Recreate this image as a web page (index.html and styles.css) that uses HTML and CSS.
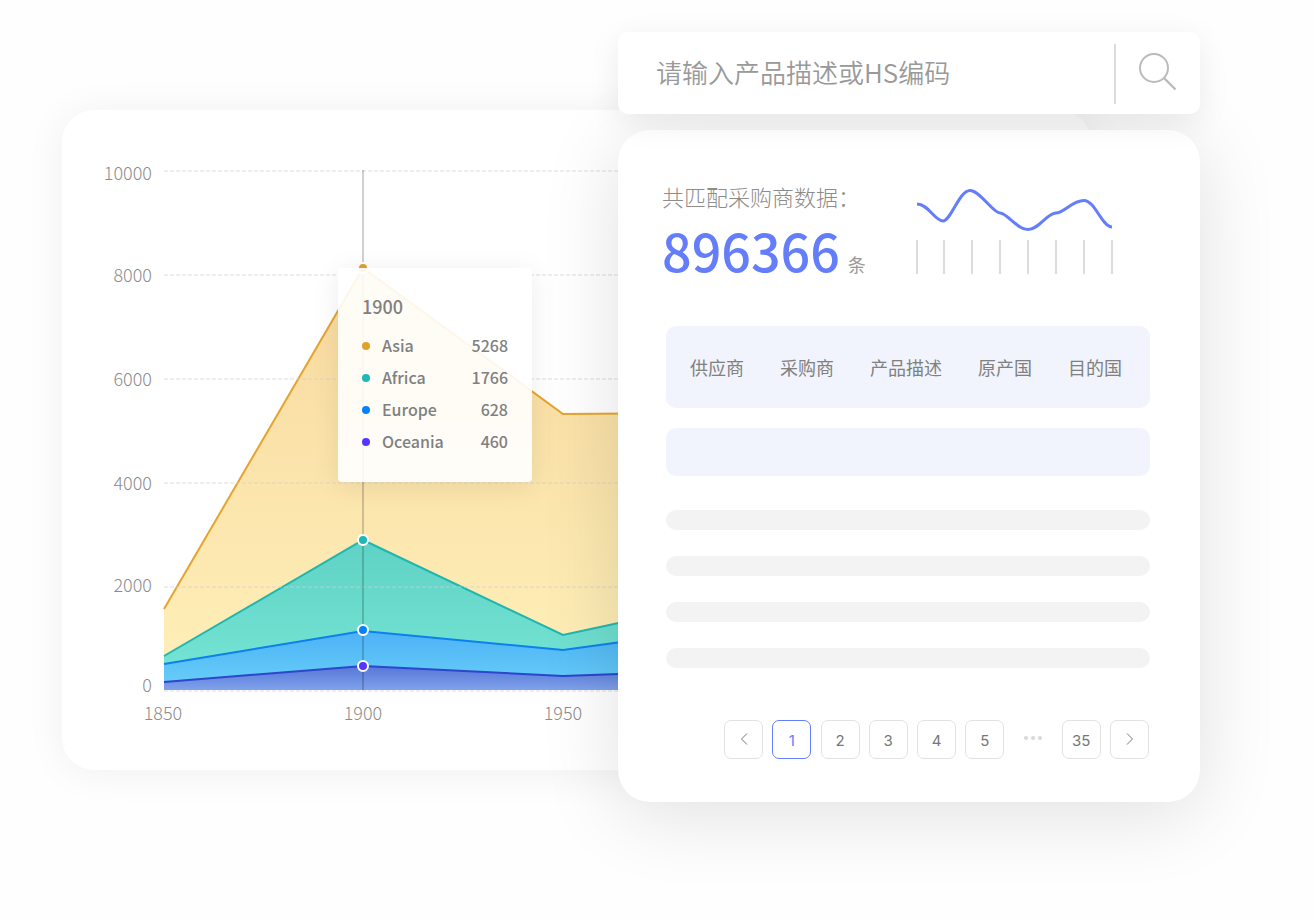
FILE: index.html
```html
<!DOCTYPE html>
<html lang="zh-CN">
<head>
<meta charset="utf-8">
<meta name="viewport" content="width=device-width, initial-scale=1">
<title>采购商数据</title>
<link rel="stylesheet" href="styles.css">
</head>
<body>
<main class="board">
  <section class="chart-card" aria-label="Population">
    <svg class="chart" viewBox="0 0 1029 660" role="img" aria-label="1850 – 1950">
      <defs>
        <linearGradient id="asia" x1="0" y1="0" x2="0" y2="1"><stop offset="0" stop-color="#f8d99e"/><stop offset="1" stop-color="#fef0b9"/></linearGradient>
        <linearGradient id="africa" x1="0" y1="0" x2="0" y2="1"><stop offset="0" stop-color="#5ed2c5"/><stop offset="1" stop-color="#78e6d5"/></linearGradient>
        <linearGradient id="europe" x1="0" y1="0" x2="0" y2="1"><stop offset="0" stop-color="#4cb2f6"/><stop offset="1" stop-color="#6bd0f8"/></linearGradient>
        <linearGradient id="oceania" x1="0" y1="0" x2="0" y2="1"><stop offset="0" stop-color="#5576d8"/><stop offset="1" stop-color="#80a2ea"/></linearGradient>
      </defs>
      <g>
        <path fill="url(#asia)" d="M102 499 301 158 501 304 640 303V580H102Z"/>
        <path class="line line-asia" d="M102 499 301 158 501 304 640 303"/>
        <path fill="url(#africa)" d="M102 546 301 430 501 525 640 495V580H102Z"/>
        <path class="line line-africa" d="M102 546 301 430 501 525 640 495"/>
        <path fill="url(#europe)" d="M102 554 301 521 501 540 640 521V580H102Z"/>
        <path class="line line-europe" d="M102 554 301 521 501 540 640 521"/>
        <path fill="url(#oceania)" d="M102 572 301 556 501 566 640 561V580H102Z"/>
        <path class="line line-oceania" d="M102 572 301 556 501 566 640 561"/>
      </g>
      <path class="grid-lines" d="M102 61H640M102 165H640M102 269H640M102 373H640M102 477H640M102 581H640"/>
      <path class="pointer-line" d="M301 60V580"/>
      <g class="markers">
        <circle class="fill-asia" cx="301" cy="158" r="5"/>
        <circle class="fill-africa" cx="301" cy="430" r="5"/>
        <circle class="fill-europe" cx="301" cy="520" r="5"/>
        <circle class="fill-oceania" cx="301" cy="556" r="5"/>
      </g>
      <g class="axis axis-y">
        <text x="90" y="70">10000</text>
        <text x="90" y="172">8000</text>
        <text x="90" y="276">6000</text>
        <text x="90" y="380">4000</text>
        <text x="90" y="482">2000</text>
        <text x="90" y="582">0</text>
      </g>
      <g class="axis axis-x">
        <text x="101" y="610">1850</text>
        <text x="301" y="610">1900</text>
        <text x="501" y="610">1950</text>
      </g>
    </svg>
    <div class="tooltip" role="tooltip">
      <h2 class="tooltip-title">1900</h2>
      <dl class="tooltip-list">
        <div class="tooltip-row"><dt class="name asia">Asia</dt><dd>5268</dd></div>
        <div class="tooltip-row"><dt class="name africa">Africa</dt><dd>1766</dd></div>
        <div class="tooltip-row"><dt class="name europe">Europe</dt><dd>628</dd></div>
        <div class="tooltip-row"><dt class="name oceania">Oceania</dt><dd>460</dd></div>
      </dl>
    </div>
  </section>

  <div class="side">
    <form class="search" role="search">
      <input class="search-input" type="text" aria-label="请输入产品描述或HS编码" placeholder="请输入产品描述或HS编码">
      <button class="search-button" type="button" aria-label="搜索">
        <svg width="40" height="40" viewBox="0 0 40 40" fill="none" stroke="#bbb" stroke-width="2"><circle cx="16" cy="16" r="14"/><path stroke-width="2.4" d="M26 26 37.500 37.500"/></svg>
      </button>
    </form>

    <section class="result-card">
      <header class="summary">
        <div class="total">
          <p class="total-label">共匹配采购商数据：</p>
          <p class="total-value"><strong class="number">896366</strong><span class="unit">条</span></p>
        </div>
        <svg class="spark" width="198" height="90" viewBox="0 0 198 90" fill="none" aria-hidden="true">
          <path stroke="#647dfa" stroke-width="3" d="M2 20C13 20 20 37 28 37C36 37 44 6.500 55 6.500C65 6.500 78 29 85 29C92 29 102 45.500 113 45.500C124 45.500 132 29 141 29C149 29 157 16.500 169 16.500C180 16.500 187 43 197 43"/>
          <path stroke="#dcdcdc" stroke-width="2" d="M2 56V90M29 56V90M57 56V90M85 56V90M113 56V90M141 56V90M169 56V90M197 56V90"/>
        </svg>
      </header>
      <table class="columns">
        <thead>
          <tr><th scope="col">供应商</th><th scope="col">采购商</th><th scope="col">产品描述</th><th scope="col">原产国</th><th scope="col">目的国</th></tr>
        </thead>
      </table>
      <div class="row-highlight"></div>
      <div class="placeholders">
        <div class="bar"></div>
        <div class="bar"></div>
        <div class="bar"></div>
        <div class="bar"></div>
      </div>
      <nav class="pages" aria-label="分页">
        <button class="page" type="button" aria-label="上一页"><svg width="16" height="16" viewBox="0 0 16 16"><path d="M11 2.500 5.500 8 11 13.500"/></svg></button>
        <button class="page current" type="button" aria-current="page">1</button>
        <button class="page" type="button">2</button>
        <button class="page" type="button">3</button>
        <button class="page" type="button">4</button>
        <button class="page" type="button">5</button>
        <span class="ellipsis"><svg width="20" height="4" viewBox="0 0 20 4" fill="#d8d8d8"><circle cx="3" cy="2" r="2"/><circle cx="10" cy="2" r="2"/><circle cx="17" cy="2" r="2"/></svg></span>
        <button class="page" type="button">35</button>
        <button class="page" type="button" aria-label="下一页"><svg width="16" height="16" viewBox="0 0 16 16"><path d="M5 2.500 10.500 8 5 13.500"/></svg></button>
      </nav>
    </section>
  </div>
</main>
</body>
</html>
```
FILE: styles.css
```css
* {
  box-sizing: border-box;
}

body {
  margin: 0;
  background: #fefefe;
  color: #808080;
  font-family: "Noto Sans CJK SC", sans-serif;
}

h2, p, dl, dd {
  margin: 0;
}

button, input {
  font: inherit;
}

/* The chart card runs behind the side column, so both share the middle track. */
.board {
  display: grid;
  grid-template-columns: minmax(0, 556fr) minmax(0, 473fr) minmax(0, 109fr);
  align-items: start;
  padding: 32px 114px 118px 62px;
}

.chart-card {
  position: relative;
  grid-area: 1 / 1 / 2 / 3;
  margin-top: 78px;
  border-radius: 32px;
  background: #fff;
  box-shadow: 0 2px 40px rgba(0, 0, 0, 0.06);
}

.chart {
  display: block;
  width: 100%;
  height: auto;
}

.line {
  fill: none;
  stroke-width: 2;
}

.line-asia { stroke: #e6a32e; }
.line-africa { stroke: #1fb6b0; }
.line-europe { stroke: #0b80f0; }
.line-oceania { stroke: #2c46cc; }

.fill-asia { fill: #e0a12b; }
.fill-africa { fill: #1fb8b4; }
.fill-europe { fill: #0582f5; }
.fill-oceania { fill: #5535ff; }

.markers {
  stroke: #fff;
  stroke-width: 2;
}

.grid-lines {
  fill: none;
  stroke: rgba(205, 205, 210, 0.35);
  stroke-width: 2;
  stroke-dasharray: 4 2;
}

.pointer-line {
  stroke: rgba(0, 0, 0, 0.18);
  stroke-width: 2;
}

.axis {
  fill: #8c8c8c;
  font-size: 18px;
  font-weight: 300;
}

.axis-y { text-anchor: end; }
.axis-x { text-anchor: middle; }

.tooltip {
  position: absolute;
  top: 158px;
  left: 276px;
  width: 194px;
  padding: 23px 24px 25px;
  border-radius: 4px;
  background: rgba(255, 255, 255, 0.9);
  box-shadow: 0 4px 28px rgba(0, 0, 0, 0.08);
}

.tooltip-title {
  margin-bottom: 8px;
  font-size: 18px;
  font-weight: 500;
  line-height: 30px;
}

.tooltip-row {
  display: flex;
  justify-content: space-between;
  font-size: 16px;
  font-weight: 500;
  line-height: 32px;
}

.name {
  display: flex;
  align-items: center;
  gap: 12px;
}

.name::before {
  width: 8px;
  height: 8px;
  margin-top: 2px;
  border-radius: 50%;
  background: currentColor;
  content: "";
}

.asia::before { background: #e0a12b; }
.africa::before { background: #1fb8b4; }
.europe::before { background: #0582f5; }
.oceania::before { background: #5535ff; }

.side {
  position: relative;
  display: grid;
  grid-area: 1 / 2 / 2 / 4;
  gap: 16px;
}

.search {
  position: relative;
  z-index: 1;
  display: flex;
  align-items: center;
  padding: 12px 0 10px 38px;
  border-radius: 10px;
  background: #fff;
  box-shadow: 0 8px 32px rgba(0, 0, 0, 0.08);
}

.search-input {
  flex: 1;
  min-width: 0;
  height: 60px;
  padding: 0 0 6px;
  border: 0;
  outline: 0;
  background: none;
  font-size: 26px;
  font-weight: 350;
}

.search-input::placeholder {
  color: #999;
  opacity: 1;
}

.search-button {
  display: grid;
  place-items: center;
  width: 86px;
  height: 60px;
  padding: 0 0 4px;
  border: 0;
  border-left: 2px solid #dcdcdc;
  background: none;
}

.result-card {
  padding: 50px 50px 43px 48px;
  border-radius: 32px;
  background: #fff;
  box-shadow: 0 12px 80px rgba(0, 0, 0, 0.12);
}

.summary {
  display: flex;
  justify-content: space-between;
  padding-right: 37px;
  margin: 0 0 46px -4px;
}

.spark {
  margin-top: 4px;
}

.total-label {
  color: #8c8c8c;
  font-size: 22px;
  font-weight: 300;
  line-height: 32px;
}

.total-value {
  display: flex;
  align-items: baseline;
  gap: 8px;
  margin-top: 8px;
  color: #999;
  line-height: 60px;
}

.number {
  color: #647dfa;
  font-size: 52px;
  font-weight: 500;
}

.unit {
  font-size: 18px;
  line-height: 18px;
}

.columns {
  width: 100%;
  height: 82px;
  padding: 0 10px 0 6px;
  border-spacing: 0;
  border-radius: 10px;
  background: #f1f4fd;
}

.columns th {
  padding: 0 18px;
  font-size: 18px;
  font-weight: 400;
  text-align: left;
  white-space: nowrap;
}

.row-highlight {
  height: 48px;
  margin-top: 20px;
  border-radius: 10px;
  background: #f1f4fd;
}

.placeholders {
  display: grid;
  gap: 26px;
  margin: 34px 0 52px;
}

.bar {
  height: 20px;
  border-radius: 10px;
  background: #f3f3f3;
}

.pages {
  display: flex;
  justify-content: space-between;
  padding: 0 1px 0 58px;
}

.page, .ellipsis {
  display: grid;
  place-items: center;
  width: 39px;
  height: 39px;
}

.page {
  padding: 2px 0 0;
  border: 1px solid #e2e2e2;
  border-radius: 7px;
  background: #fff;
  color: #777;
  font-family: Inter, sans-serif;
  font-size: 15px;
  font-weight: 400;
}

.page svg {
  margin-bottom: 3px;
  fill: none;
  stroke: #777;
}

.page.current {
  border-color: #647dfa;
  color: #647dfa;
}

.ellipsis {
  padding-bottom: 3px;
}
```
